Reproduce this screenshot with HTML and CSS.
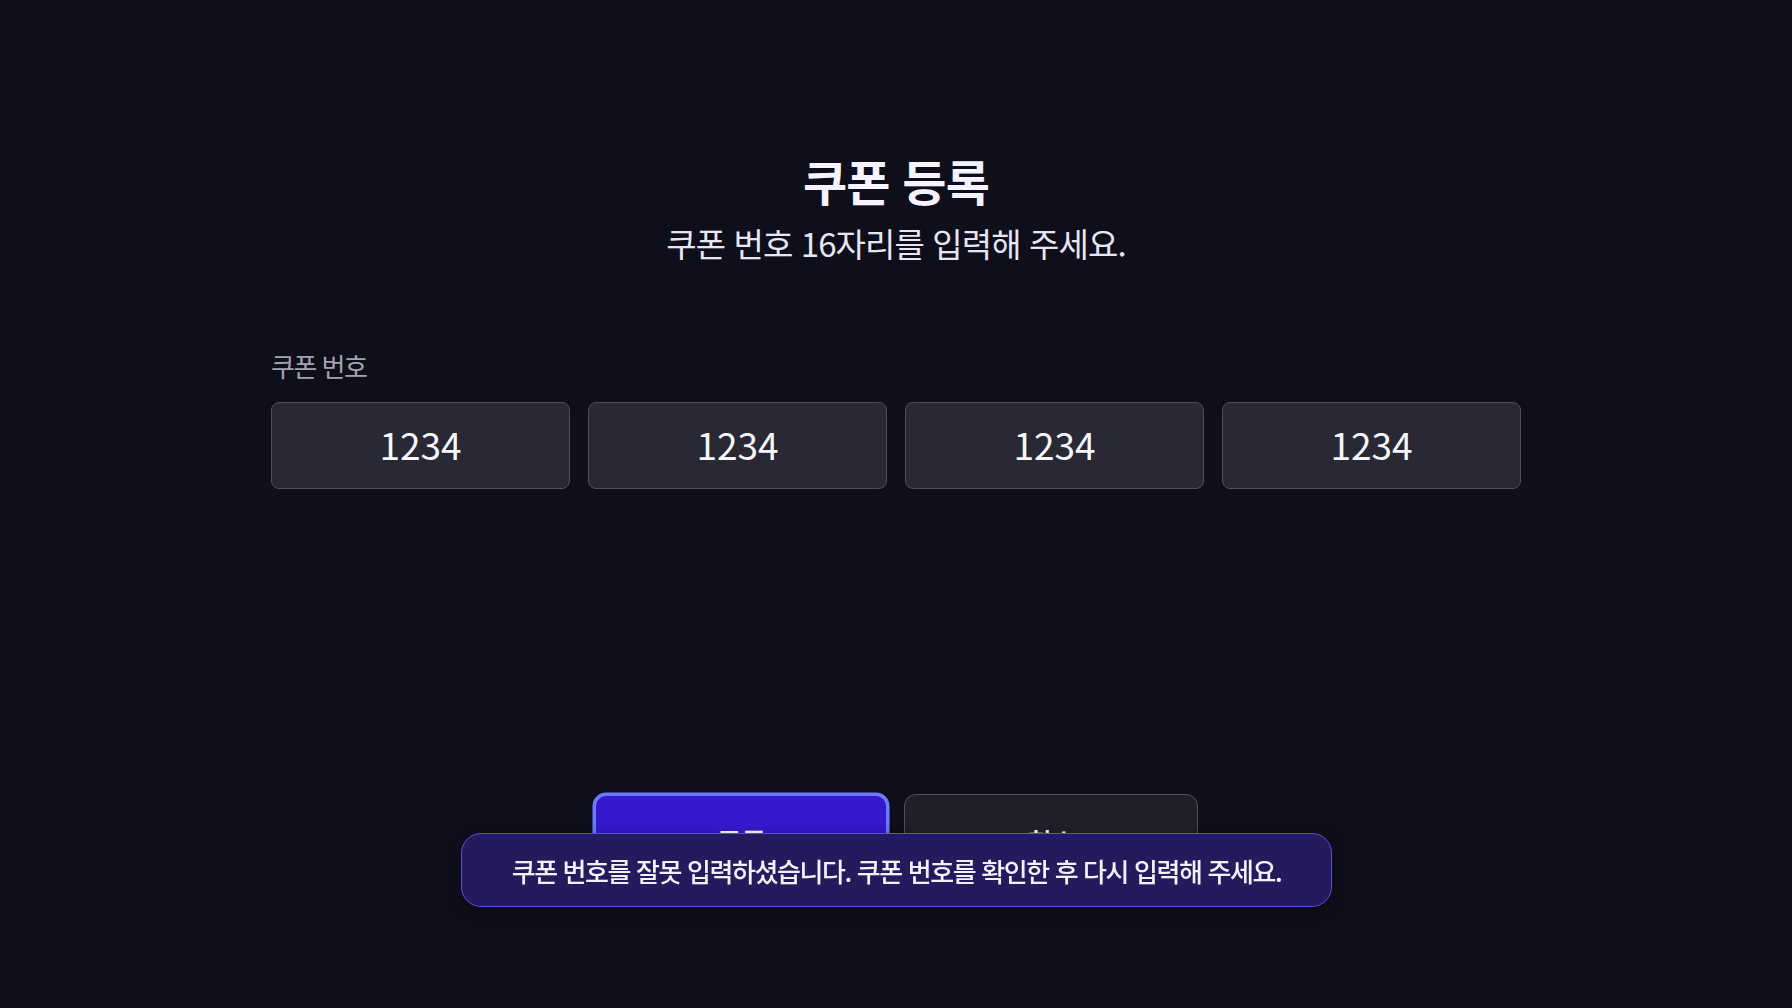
FILE: index.html
```html
<!DOCTYPE html>
<html lang="ko">
<head>
<meta charset="utf-8">
<title>쿠폰 등록</title>
<link rel="stylesheet" href="styles.css">
</head>
<body>
<main class="page">
  <header class="head">
    <h1 class="title">쿠폰 등록</h1>
    <p class="subtitle">쿠폰 번호 16자리를 입력해 주세요.</p>
  </header>
  <section class="field">
    <div class="label">쿠폰 번호</div>
    <div class="inputs">
      <div class="code">1234</div>
      <div class="code">1234</div>
      <div class="code">1234</div>
      <div class="code">1234</div>
    </div>
  </section>
  <div class="actions">
    <button class="btn btn-primary">등록</button>
    <button class="btn btn-secondary">취소</button>
  </div>
</main>
<div class="toast">쿠폰 번호를 잘못 입력하셨습니다. 쿠폰 번호를 확인한 후 다시 입력해 주세요.</div>
</body>
</html>
```
FILE: styles.css
```css
* { box-sizing: border-box; }
html, body { margin: 0; padding: 0; }
body {
  background: #0f0e1b;
  width: 1792px;
  height: 1008px;
  overflow: hidden;
  font-family: "Noto Sans CJK KR", "Noto Sans", sans-serif;
  color: #f4f2ff;
}
.page {
  width: 1250px;
  margin: 0 auto;
  padding-top: 152px;
  display: flex;
  flex-direction: column;
}
.head {
  display: flex;
  flex-direction: column;
  align-items: center;
}
.title {
  margin: 0;
  font-size: 48px;
  line-height: 56px;
  font-weight: 700;
  letter-spacing: -0.8px;
  color: #f5f3ff;
}
.subtitle {
  margin: 15px 0 0;
  font-size: 33px;
  line-height: 40px;
  font-weight: 400;
  letter-spacing: -0.9px;
  color: #e8e6f2;
}
.field {
  margin-top: 88px;
  display: flex;
  flex-direction: column;
}
.label {
  font-size: 26px;
  line-height: 30px;
  letter-spacing: -1.5px;
  color: #a4a3ae;
}
.inputs {
  margin-top: 21px;
  display: grid;
  grid-template-columns: repeat(4, 1fr);
  gap: 18px;
}
.code {
  height: 87px;
  background: #282935;
  border: 1.5px solid #4d4e5a;
  border-radius: 8px;
  display: flex;
  align-items: center;
  justify-content: center;
  font-size: 37px;
  color: #f6f6fb;
  padding-bottom: 3px;
}
.actions {
  margin-top: 305px;
  display: flex;
  justify-content: center;
  gap: 16px;
}
.btn {
  width: 294px;
  height: 96px;
  border-radius: 12px;
  font-family: inherit;
  font-size: 28px;
  font-weight: 500;
  color: #ffffff;
  letter-spacing: -1px;
}
.btn-primary {
  background: #3619cd;
  border: 2px solid #6b7dff;
  box-shadow: 0 0 0 1.5px #6b7dff;
}
.btn-secondary {
  background: #1f2029;
  border: 1.5px solid #50505a;
}
.toast {
  position: fixed;
  left: 461px;
  top: 833px;
  width: 871px;
  height: 74px;
  background: #231b5c;
  border: 1.5px solid #5b4fd6;
  border-radius: 20px;
  display: flex;
  align-items: center;
  justify-content: center;
  font-size: 26px;
  font-weight: 500;
  letter-spacing: -1.4px;
  color: #f2f0fb;
  box-shadow: 0 4px 16px rgba(0,0,0,0.35);
}
```
